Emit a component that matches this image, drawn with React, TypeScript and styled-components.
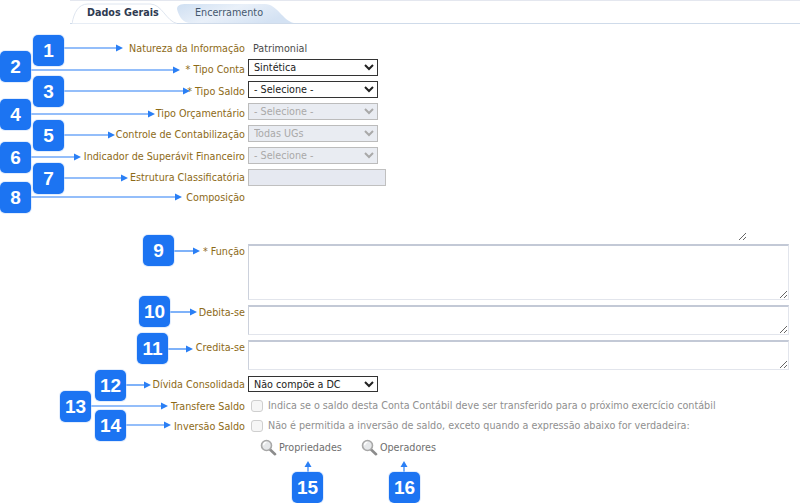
import React from "react";
import styled, { createGlobalStyle } from "styled-components";

const FONT = `"DejaVu Sans Condensed", "DejaVu Sans", Tahoma, sans-serif`;
const TEXT_SIZE = "10.7px";

const Global = createGlobalStyle`
  html, body { margin: 0; padding: 0; background: #fff; }
  body { font-family: ${FONT}; font-size: ${TEXT_SIZE}; }
`;

const Page = styled.div`
  position: relative;
  width: 800px;
  height: 503px;
  overflow: hidden;
  background: #fff;
`;

const TabStrip = styled.div`
  display: flex;
  height: 22px;
  padding: 0 0 0 2px;
  margin: 0 0 13px 70px;
  box-sizing: content-box;
  border-top: 1px solid #e4e7ef;
  border-bottom: 1px solid #cfdbea;
`;

const Tab = styled.div<{ $width: number; $active?: boolean }>`
  position: relative;
  width: ${(p) => p.$width}px;
  height: 22px;
  display: flex;
  align-items: center;
  padding-left: ${(p) => (p.$active ? 15 : 18)}px;
  box-sizing: border-box;
  font-size: ${TEXT_SIZE};
  font-weight: ${(p) => (p.$active ? 700 : 400)};
  color: ${(p) => (p.$active ? "#2f3b52" : "#46586e")};
  & > svg { position: absolute; left: 0; top: 0; }
  & > span { position: relative; }
`;

const Form = styled.div`
  display: flex;
  flex-direction: column;
`;

const Row = styled.div<{ $height: number }>`
  display: grid;
  grid-template-columns: 245px 1fr;
  column-gap: 3px;
  height: ${(p) => p.$height}px;
  align-items: start;
`;

const Label = styled.label<{ $offset: number }>`
  text-align: right;
  color: #8d6a17;
  font-size: ${TEXT_SIZE};
  line-height: 15px;
  white-space: nowrap;
  padding-top: ${(p) => p.$offset}px;
`;

const Value = styled.span`
  color: #4b4b4b;
  font-size: ${TEXT_SIZE};
  line-height: 15px;
  padding-top: 4px;
  padding-left: 5px;
`;

const Select = styled.select<{ $height?: number }>`
  display: block;
  width: 130px;
  height: ${(p) => p.$height ?? 17}px;
  box-sizing: border-box;
  border: 1px solid #333;
  border-radius: 0;
  background: #fff;
  color: #222;
  padding: 0 0 0 1px;
  font-family: ${FONT};
  font-size: ${TEXT_SIZE};
  &:disabled {
    border-color: #bcbcbc;
    background: #e9ecf2;
    color: #a9a9a9;
    opacity: 1;
  }
`;

const ReadOnly = styled.input`
  display: block;
  width: 138px;
  height: 17px;
  box-sizing: border-box;
  border: 1px solid #c0c0c0;
  background: #e6e9f1;
  padding: 0;
`;

const Area = styled.textarea<{ $height: number }>`
  display: block;
  width: 541px;
  height: ${(p) => p.$height}px;
  box-sizing: border-box;
  margin: 0;
  padding: 2px;
  background: #fff;
  border: 1px solid #e2e5ec;
  border-top: 2px solid #c3c9d6;
  border-left: 1px solid #ccd1dc;
  border-radius: 0;
  outline: none;
  resize: both;
`;

const GhostArea = styled.textarea`
  display: block;
  width: 499px;
  height: 51px;
  box-sizing: border-box;
  margin: 0;
  padding: 0;
  border: none;
  background: transparent;
  outline: none;
  resize: both;
`;

const CheckLine = styled.div`
  display: flex;
  align-items: center;
  gap: 5px;
  padding: 2px 0 0 3px;
  color: #8f8f8f;
  font-size: ${TEXT_SIZE};
  line-height: 14px;
  white-space: nowrap;
`;

const Check = styled.input`
  appearance: none;
  width: 12px;
  height: 12px;
  margin: 0;
  box-sizing: border-box;
  border: 1px solid #cfcfcf;
  border-radius: 3px;
  background: #f6f6f6;
`;

const Links = styled.div`
  display: flex;
  gap: 19px;
  padding: 2px 0 0 12px;
`;

const LinkItem = styled.a`
  display: flex;
  align-items: center;
  gap: 2px;
  color: #6f6f6f;
  font-size: ${TEXT_SIZE};
  line-height: 16px;
  white-space: nowrap;
`;

const Arrows = styled.svg`
  position: absolute;
  left: 0;
  top: 0;
  pointer-events: none;
`;

const Badge = styled.div<{ $x: number; $y: number }>`
  position: absolute;
  left: ${(p) => p.$x}px;
  top: ${(p) => p.$y}px;
  width: 31px;
  height: 31px;
  display: flex;
  align-items: center;
  justify-content: center;
  border-radius: 5px;
  background: #1c74f2;
  box-shadow: 0 0 0 1px rgba(190, 215, 250, 0.45);
  color: #fff;
  font-family: "Liberation Sans", Arial, sans-serif;
  font-weight: 700;
  font-size: 19px;
`;

const Lens = () => (
  <svg width="17" height="17" viewBox="0 0 17 17">
    <path d="M9.5 10 L15 15.2" stroke="#8c8c8c" strokeWidth="2.6" strokeLinecap="round" />
    <circle cx="6.5" cy="6.5" r="5" fill="#e6e8ea" stroke="#a8a8a8" strokeWidth="1.6" />
    <path d="M3.6 6.2 A3 3 0 0 1 6.4 3.4" stroke="#fff" strokeWidth="1.4" fill="none" />
  </svg>
);

const badges: [string, number, number][] = [
  ["1", 33, 35], ["2", 0, 51], ["3", 33, 76], ["4", 0, 99],
  ["5", 33, 120], ["6", 0, 142], ["7", 33, 163], ["8", 0, 182],
  ["9", 143, 235], ["10", 139, 296], ["11", 137, 333], ["12", 95, 370],
  ["13", 60, 391], ["14", 95, 410], ["15", 292, 472], ["16", 389, 472],
];

const hArrows: [number, number, number][] = [
  [63, 123, 48], [31, 180, 70], [63, 190, 91], [31, 155, 114],
  [63, 115, 135], [31, 81, 157], [63, 128, 178], [31, 182, 197],
  [173, 200, 251], [170, 197, 312], [167, 193, 349], [125, 151, 385],
  [90, 168, 406], [125, 171, 425],
];

const vArrows: [number, number, number][] = [
  [308, 472, 461], [404, 472, 461],
];

const BLUE = "#2a7ff5";

export default function App() {
  return (
    <Page>
      <Global />
      <TabStrip>
        <Tab $width={105} $active>
          <svg width="105" height="23" viewBox="0 0 105 23">
            <path d="M0 22.5 C2 12 6 3 16 3 L78 3 C90 3 94 20 105 22.5" fill="#fff" stroke="#dfe6f0" />
          </svg>
          <span>Dados Gerais</span>
        </Tab>
        <Tab $width={118}>
          <svg width="118" height="23" viewBox="0 0 118 23">
            <defs>
              <linearGradient id="tabg" x1="0" y1="0" x2="1" y2="0.4">
                <stop offset="0" stopColor="#cfdff2" />
                <stop offset="0.5" stopColor="#e9f0f9" />
                <stop offset="1" stopColor="#d4e2f3" />
              </linearGradient>
            </defs>
            <path d="M0 8 C0 4 4 3 9 3 L88 3 C100 3 106 20 117 22 L14 22 C6 22 2 16 0 8 Z" fill="url(#tabg)" />
          </svg>
          <span>Encerramento</span>
        </Tab>
      </TabStrip>

      <Form>
        <Row $height={22}>
          <Label $offset={4}>Natureza da Informação</Label>
          <Value>Patrimonial</Value>
        </Row>
        <Row $height={22}>
          <Label $offset={3}>* Tipo Conta</Label>
          <Select defaultValue="s"><option value="s">Sintética</option></Select>
        </Row>
        <Row $height={22}>
          <Label $offset={3}>* Tipo Saldo</Label>
          <Select><option>- Selecione -</option></Select>
        </Row>
        <Row $height={22}>
          <Label $offset={3}>Tipo Orçamentário</Label>
          <Select disabled><option>- Selecione -</option></Select>
        </Row>
        <Row $height={22}>
          <Label $offset={2}>Controle de Contabilização</Label>
          <Select disabled><option>Todas UGs</option></Select>
        </Row>
        <Row $height={22}>
          <Label $offset={2}>Indicador de Superávit Financeiro</Label>
          <Select disabled><option>- Selecione -</option></Select>
        </Row>
        <Row $height={21}>
          <Label $offset={1}>Estrutura Classificatória</Label>
          <ReadOnly disabled />
        </Row>
        <Row $height={54}>
          <Label $offset={0}>Composição</Label>
          <GhostArea />
        </Row>
        <Row $height={61}>
          <Label $offset={0}>* Função</Label>
          <Area $height={56} />
        </Row>
        <Row $height={35}>
          <Label $offset={0}>Debita-se</Label>
          <Area $height={30} />
        </Row>
        <Row $height={36}>
          <Label $offset={0}>Credita-se</Label>
          <Area $height={30} />
        </Row>
        <Row $height={21}>
          <Label $offset={1}>Dívida Consolidada</Label>
          <Select $height={16} defaultValue="n"><option value="n">Não compõe a DC</option></Select>
        </Row>
        <Row $height={20}>
          <Label $offset={2}>Transfere Saldo</Label>
          <CheckLine>
            <Check type="checkbox" disabled />
            Indica se o saldo desta Conta Contábil deve ser transferido para o próximo exercício contábil
          </CheckLine>
        </Row>
        <Row $height={20}>
          <Label $offset={2}>Inversão Saldo</Label>
          <CheckLine>
            <Check type="checkbox" disabled />
            Não é permitida a inversão de saldo, exceto quando a expressão abaixo for verdadeira:
          </CheckLine>
        </Row>
        <Row $height={24}>
          <span />
          <Links>
            <LinkItem><Lens />Propriedades</LinkItem>
            <LinkItem><Lens />Operadores</LinkItem>
          </Links>
        </Row>
      </Form>

      <Arrows width="800" height="503" viewBox="0 0 800 503">
        {hArrows.map(([a, b, y]) => (
          <g key={`${a}-${y}`}>
            <line x1={a} y1={y} x2={b - 5} y2={y} stroke={BLUE} strokeWidth="1.2" />
            <path d={`M${b} ${y} L${b - 7} ${y - 3.5} L${b - 7} ${y + 3.5} Z`} fill={BLUE} />
          </g>
        ))}
        {vArrows.map(([x, a, b]) => (
          <g key={x}>
            <line x1={x} y1={a} x2={x} y2={b + 4} stroke={BLUE} strokeWidth="1.2" />
            <path d={`M${x} ${b} L${x - 3.5} ${b + 6} L${x + 3.5} ${b + 6} Z`} fill={BLUE} />
          </g>
        ))}
      </Arrows>
      {badges.map(([n, x, y]) => (
        <Badge key={n} $x={x} $y={y}>{n}</Badge>
      ))}
    </Page>
  );
}
